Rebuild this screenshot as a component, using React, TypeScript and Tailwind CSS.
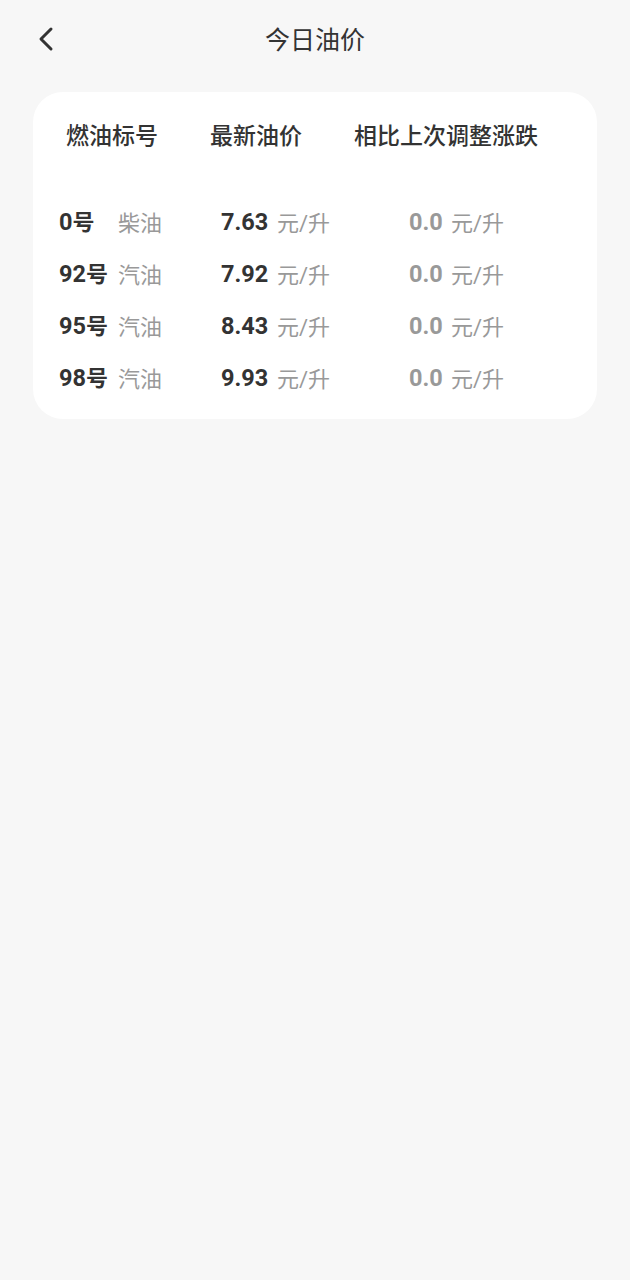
import React from "react";

const rows = [
  { grade: "0", type: "柴油", price: "7.63" },
  { grade: "92", type: "汽油", price: "7.92" },
  { grade: "95", type: "汽油", price: "8.43" },
  { grade: "98", type: "汽油", price: "9.93" },
];

export default function App() {
  return (
    <div
      className="min-h-[1280px] w-full bg-[#f7f7f7] text-[#333333]"
      style={{ fontFamily: "Roboto, 'Noto Sans CJK SC', sans-serif" }}
    >
      <div className="relative flex h-[80px] items-center justify-center">
        <div className="absolute left-[36px] top-[26px] flex h-[26px] w-[20px] items-center">
          <svg width="20" height="26" viewBox="0 0 20 26" fill="none">
            <path d="M15 3 L5 13 L15 23" stroke="#333333" strokeWidth="3" strokeLinecap="round" strokeLinejoin="round" />
          </svg>
        </div>
        <span className="text-[25px] leading-none">今日油价</span>
      </div>
      <div className="mx-[33px] mt-[12px] rounded-[30px] bg-white pb-[14px]">
        <div className="flex h-[90px] items-center text-[23px] font-medium">
          <span className="ml-[33px] w-[144px]">燃油标号</span>
          <span className="w-[144px]">最新油价</span>
          <span>相比上次调整涨跌</span>
        </div>
        <div className="mt-[15px] flex flex-col">
          {rows.map((r) => (
            <div key={r.grade} className="flex h-[52px] items-center text-[22px]">
              <span className="ml-[26px] w-[59px] font-bold">
                <span className="text-[23.5px]">{r.grade}</span>号
              </span>
              <span className="w-[103px] text-[#999999]">{r.type}</span>
              <span className="w-[56px] text-[23.5px] font-bold">{r.price}</span>
              <span className="w-[132px] text-[#999999]">元/升</span>
              <span className="w-[42px] text-[23.5px] font-bold text-[#999999]">0.0</span>
              <span className="text-[#999999]">元/升</span>
            </div>
          ))}
        </div>
      </div>
    </div>
  );
}
